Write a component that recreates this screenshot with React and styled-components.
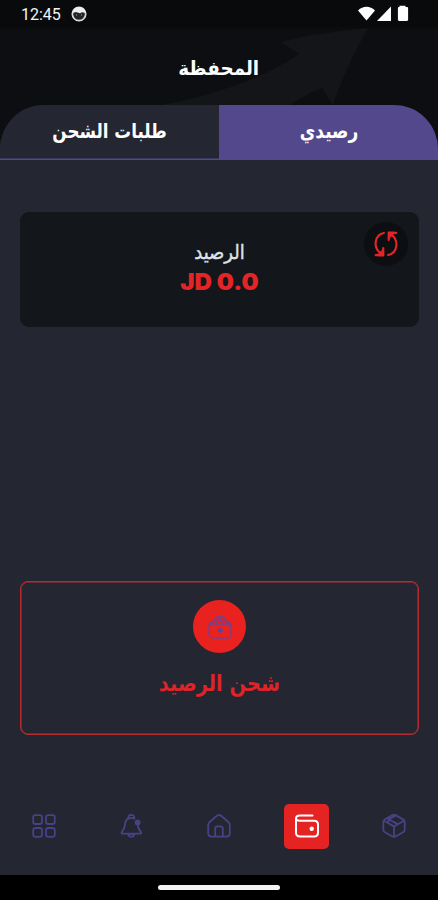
import { useState } from "react";
import styled, { createGlobalStyle } from "styled-components";

const GlobalStyle = createGlobalStyle`
    * {
        box-sizing: border-box;
    }
    body {
        margin: 0;
        background: #000;
        font-family: "DejaVu Sans", "Noto Sans", sans-serif;
    }
    button {
        border: none;
        padding: 0;
        background: none;
        font-family: inherit;
        cursor: pointer;
    }
`

const Phone = styled.div`
    width: 438px;
    height: 900px;
    display: flex;
    flex-direction: column;
    background: #0d0e11;
    overflow: hidden;
`

// status bar + page title
const Header = styled.header`
    position: relative;
    height: 105px;
    flex-shrink: 0;
    background: linear-gradient(#090a0c 0, #090a0c 27px, #0d0e11 30px);
`
const HeaderArrow = styled.svg`
    position: absolute;
    inset: 0;
`
const StatusBar = styled.div`
    position: relative;
    height: 28px;
    padding: 0 29px 0 21px;
    display: flex;
    align-items: center;
    justify-content: space-between;
    color: #fff;
`
const StatusGroup = styled.div`
    display: flex;
    align-items: center;
    gap: ${(props) => props.$gap}px;
`
const Clock = styled.span`
    font: 400 16px/28px Roboto, sans-serif;
    padding-top: 2px;
    color: #f4f4f4;
`
const Title = styled.h1`
    position: relative;
    margin: 26px 0 0;
    text-align: center;
    font-size: 18px;
    line-height: 28px;
    color: #fff;
`

// narrows or stretches the default letterforms
const Fit = styled.span`
    display: inline-block;
    transform: scale(${(props) => props.$x || 1}, ${(props) => props.$y || 1});
`

const TabList = styled.div`
    height: 55px;
    flex-shrink: 0;
    display: flex;
    border-radius: 44px 44px 0 0;
    overflow: hidden;
    background: #242631;
`
const Tab = styled.button`
    flex: 1;
    padding-bottom: 4px;
    box-shadow: inset 0 -1.5px 0 #54488c;
    background: ${(props) => (props.$active ? "#54488c" : "#242631")};
    color: #fff;
    font-size: 18px;
    font-weight: 700;
`

const Body = styled.main`
    flex: 1;
    padding: 52px 19px 0 20px;
    display: flex;
    flex-direction: column;
    justify-content: space-between;
    background: #242631;
`
const BalanceCard = styled.section`
    position: relative;
    height: 115px;
    padding-top: 26px;
    border-radius: 9px;
    background: #13161a;
    text-align: center;
`
const BalanceLabel = styled.div`
    font-size: 18px;
    line-height: 28px;
    color: #dfe3e6;
    -webkit-text-stroke: 0.4px #dfe3e6;
`
const Amount = styled.div`
    direction: ltr;
    font: 900 23px/32px Inter, sans-serif;
    color: #e42527;
`
const RefreshButton = styled.button`
    position: absolute;
    top: 10px;
    right: 11px;
    width: 44px;
    height: 44px;
    border-radius: 50%;
    display: flex;
    align-items: center;
    justify-content: center;
    background: #0c0e11;
    color: #e42527;
`
const ChargeButton = styled.button`
    height: 154px;
    padding-top: 18px;
    border: 1px solid #b32d31;
    box-shadow: inset 0 0 0 0.5px #b32d31;
    border-radius: 8px;
    display: flex;
    flex-direction: column;
    align-items: center;
    color: #dc2429;
    font-size: 20px;
    font-weight: 700;
    line-height: 30px;
`
const ChargeIcon = styled.span`
    width: 53px;
    height: 53px;
    margin-bottom: 15px;
    border-radius: 50%;
    display: flex;
    align-items: center;
    justify-content: center;
    background: #e92220;
    color: #78408a;
`

const NavBar = styled.nav`
    height: 140px;
    flex-shrink: 0;
    padding-top: 44px;
    display: grid;
    grid-template-columns: repeat(5, 1fr);
    justify-items: center;
    align-items: center;
    background: #242631;
`
const NavItem = styled.button`
    width: 45px;
    height: 45px;
    margin-bottom: 2px;
    border-radius: 5px;
    display: flex;
    align-items: center;
    justify-content: center;
    background: ${(props) => (props.$active ? "#e42322" : "transparent")};
    color: ${(props) => (props.$active ? "#fff" : "#4a4184")};
`
const GestureBar = styled.div`
    height: 25px;
    flex-shrink: 0;
    display: flex;
    justify-content: center;
    padding-top: 10px;
    background: #000;
    &::after {
        content: "";
        width: 122px;
        height: 5px;
        border-radius: 3px;
        background: #f2f2f2;
    }
`

const Icon = ({ size = 24, stroke = 1.8, children }) => (
    <svg width={size} height={size} viewBox="0 0 24 24" fill="none" stroke="currentColor"
        strokeWidth={stroke} strokeLinecap="round" strokeLinejoin="round">
        {children}
    </svg>
)

const navItems = [
    {
        id: "apps",
        icon: (
            <Icon>
                <rect x="1.2" y="1.2" width="8.8" height="8.8" rx="2.3" />
                <rect x="14" y="1.2" width="8.8" height="8.8" rx="2.3" />
                <rect x="1.2" y="14" width="8.8" height="8.8" rx="2.3" />
                <rect x="14" y="14" width="8.8" height="8.8" rx="2.3" />
            </Icon>
        ),
    },
    {
        id: "notifications",
        icon: (
            <Icon>
                <path d="M9.5 4.6C8.9 2 10.2.9 12.3.9s3.4 1.1 2.8 3.7" />
                <path d="M15.5 4.6c-2-.9-4.4-.9-6.4 0C6.2 6.1 6 9 5.7 12c-.3 2.7-1.8 4.3-3 6.2-.5.9-.2 1.5.8 1.5h17.6c1 0 1.3-.6.8-1.5-1.2-2-2.8-3.5-3-6.6" />
                <path d="M9.2 20.2c.6 3.5 5.6 3.5 6.2 0z" />
                <circle cx="18.6" cy="8.4" r="2" fill="currentColor" />
            </Icon>
        ),
    },
    {
        id: "home",
        icon: (
            <Icon>
                <path d="M1.2 11.3c0-1.5.5-2.5 1.7-3.5l7-6c1.4-1.1 2.8-1.1 4.2 0l7 6c1.2 1 1.7 2 1.7 3.5V19c0 2.4-1.3 3.7-3.7 3.7H4.9c-2.4 0-3.7-1.3-3.7-3.7z" />
                <path d="M8.2 22v-7.3c0-1.6.8-2.4 2.3-2.4h3c1.5 0 2.3.8 2.3 2.4V22" />
            </Icon>
        ),
    },
    {
        id: "wallet",
        icon: (
            <Icon stroke={2}>
                <path d="M17.5 1.4H5C2.4 1.4 1 2.6 1 4.4s1.4 2.3 4 2.3h14c2.7 0 4 1.3 4 3.8v8c0 2.7-1.3 4.1-4 4.1H5.2c-2.8 0-4.2-1.4-4.2-4.2V4.6" />
                <circle cx="16.7" cy="14.7" r="1.2" fill="currentColor" />
            </Icon>
        ),
    },
    {
        id: "orders",
        icon: (
            <Icon>
                <path d="M10 1.4c1.4-.8 2.6-.8 4 0l7 4c1.2.7 1.7 1.6 1.7 3v7c0 1.3-.5 2.2-1.7 2.9l-7 4c-1.4.8-2.6.8-4 0l-7-4c-1.2-.7-1.7-1.6-1.7-2.9v-7c0-1.4.5-2.3 1.7-3z" />
                <path d="M1.9 6.8 12 12.4l10.1-5.6M12 12.4V22.8M6.4 9.2V5.4L14 1.4M6.6 5.2l8.2 4.4" />
            </Icon>
        ),
    },
]

function App() {
    const [tab, setTab] = useState("balance");
    const [page, setPage] = useState("wallet");

    return (
        <Phone>
            <GlobalStyle />
            <Header>
                <HeaderArrow width="438" height="105">
                    <path d="M160 105C202 98 260 81 299 54L281 42C310 34 340 31 368 28C356 50 343 75 333 105L322 88C306 94 298 100 290 105Z" fill="#141518" />
                </HeaderArrow>
                <StatusBar>
                    <StatusGroup $gap={10}>
                        <Clock>12:45</Clock>
                        <svg width="16" height="16" viewBox="0 0 16 16">
                            <circle cx="8" cy="8" r="6.7" fill="#22252a" stroke="#ddd" strokeWidth="1.7" />
                            <path d="M1.5 7C2 3 4.5 1 8 1s6 2 6.5 6L11 6.2 9 7.2 5 6z" fill="#eee" />
                            <path d="M5 9h1M10 9h1" stroke="#aaa" />
                        </svg>
                    </StatusGroup>
                    <svg width="51" height="18" viewBox="358 5 51 18" fill="#fff">
                        <path d="M358 10.5C363 5.5 370 5.5 375 10.5L366.5 20.5Z" />
                        <path d="M391 6.5V21H377Z" />
                        <path d="M399.5 7V5.8h6V7h1.2c1 0 1.4.5 1.4 1.4v11.2c0 1-.4 1.4-1.4 1.4h-7.4c-1 0-1.4-.4-1.4-1.4V8.4c0-.9.4-1.4 1.4-1.4z" />
                    </svg>
                </StatusBar>
                <Title><Fit $x={1.02} $y={1.1}>المحفظة</Fit></Title>
            </Header>
            <TabList>
                <Tab $active={tab === "requests"} onClick={() => setTab("requests")}><Fit $x={0.93} $y={1.12}>طلبات الشحن</Fit></Tab>
                <Tab $active={tab === "balance"} onClick={() => setTab("balance")}><Fit $x={0.94} $y={1.12}>رصيدي</Fit></Tab>
            </TabList>
            <Body>
                <BalanceCard>
                    <BalanceLabel><Fit $y={1.1}>الرصيد</Fit></BalanceLabel>
                    <Amount><Fit $x={1.05}>JD 0.0</Fit></Amount>
                    <RefreshButton>
                        <Icon size={26} stroke={2}>
                            <path d="M10 1.8C1.2 3.6-.4 15.4 7.5 20.8M14 22.2c8.8-1.8 10.4-13.6 2.5-19" />
                            <path d="M2.5 22.3h7v-6.5M7.5 20.8l2-2.5v4.2H5zM21.5 1.7h-7v6.5M16.5 3.2l-2 2.5V1.5H19z" fill="currentColor" fillOpacity="0.55" />
                        </Icon>
                    </RefreshButton>
                </BalanceCard>
                <ChargeButton>
                    <ChargeIcon>
                        <Icon stroke={1.5}>
                            <rect x="1" y="9" width="22" height="14" rx="4" />
                            <path d="M1 12c.2-3 1.4-5 4-5.8M23 12c-.2-3-1.4-5-4-5.8M4.5 9C6 4 8.5 1.3 12 1.3S18 4 19.5 9M8 8l2-4M12 7l1-4M15 8l1-2M9 5h5" />
                            <path d="M12 13.5v4M10 15.5h4" stroke="#5148a8" strokeWidth="1.8" />
                        </Icon>
                    </ChargeIcon>
                    <Fit $x={0.97} $y={1.12}>شحن الرصيد</Fit>
                </ChargeButton>
            </Body>
            <NavBar>
                {navItems.map((item) => (
                    <NavItem key={item.id} $active={page === item.id} onClick={() => setPage(item.id)}>
                        {item.icon}
                    </NavItem>
                ))}
            </NavBar>
            <GestureBar />
        </Phone>
    );
}

export default App;
